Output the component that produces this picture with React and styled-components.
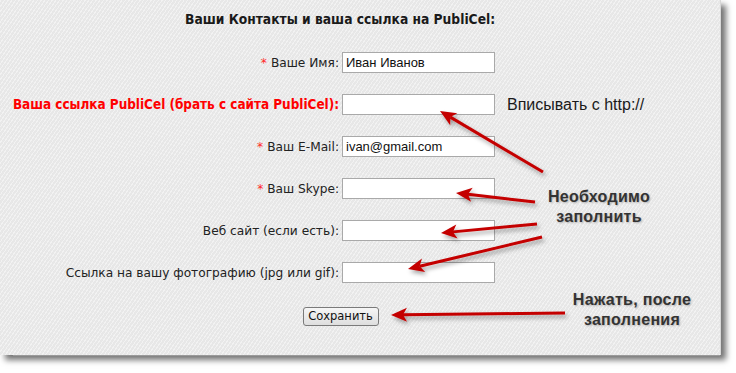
import styled, { createGlobalStyle } from "styled-components";

const Global = createGlobalStyle`
  html, body { margin: 0; padding: 0; background: #fff; }
  #root { width: 736px; height: 373px; position: relative; overflow: hidden; }
`

const Panel = styled.div`
  position: relative;
  width: 720px;
  height: 355px;
  border-right: 1px solid #d8d8d8;
  background-color: #ebebeb;
  background-image: repeating-linear-gradient(
    -55deg,
    rgba(255,255,255,0.35) 0px,
    rgba(255,255,255,0.35) 1px,
    rgba(0,0,0,0.015) 1px,
    rgba(0,0,0,0.015) 3px
  );
  box-shadow: 5px 5px 6px rgba(0,0,0,0.55);
  font-family: "DejaVu Sans", Verdana, sans-serif;
  color: #222;
  display: flex;
  flex-direction: column;

  &::after {
    content: "";
    position: absolute;
    left: 13px;
    right: 0;
    bottom: -1px;
    height: 1px;
    background: #9a9a9a;
  }
`

const Title = styled.h3`
  margin: 12px 0 0 185px;
  font-family: "DejaVu Sans Condensed", "DejaVu Sans", sans-serif;
  font-size: 13.7px;
  font-weight: bold;
  color: #1a1a1a;
  line-height: 15px;
  white-space: nowrap;
`

const Form = styled.div`
  margin-top: 25px;
  display: grid;
  grid-template-columns: 339px 153px auto;
  grid-auto-rows: 21px;
  row-gap: 21px;
  column-gap: 3px;
  align-items: center;
`

const Label = styled.label`
  justify-self: end;
  font-family: ${p => p.$red ? '"DejaVu Sans Condensed", "DejaVu Sans", sans-serif' : '"DejaVu Sans", sans-serif'};
  font-size: ${p => p.$red ? "13.4px" : "12.2px"};
  white-space: nowrap;
  color: ${p => p.$red ? "#ff0000" : "#222"};
  font-weight: ${p => p.$red ? "bold" : "normal"};
`

const Star = styled.span`
  color: #ff2a2a;
  margin-right: 4px;
`

const Input = styled.input`
  box-sizing: border-box;
  width: 153px;
  height: 21px;
  margin: 0;
  padding: 1px 3px;
  border: 1px solid #a9a9a9;
  background: #fff;
  font-family: "Liberation Sans", Arial, sans-serif;
  font-size: 13px;
  color: #111;
  outline: none;
`

const Hint = styled.span`
  margin-left: 9px;
  font-family: "Liberation Sans", Arial, sans-serif;
  font-size: 16px;
  color: #1a1a1a;
  white-space: nowrap;
`

const ButtonRow = styled.div`
  grid-column: 1 / 3;
  justify-self: center;
  padding-left: 186px;
`

const SaveButton = styled.button`
  box-sizing: border-box;
  width: 76px;
  height: 19px;
  padding: 0;
  margin-top: 3px;
  font-family: "DejaVu Sans", sans-serif;
  font-size: 11.5px;
  color: #111;
  border: 1px solid #7a7a7a;
  border-radius: 3px;
  background: linear-gradient(#f6f6f6, #dedede);
`

const Note = styled.div`
  position: absolute;
  left: ${p => p.$x}px;
  top: ${p => p.$y}px;
  width: ${p => p.$w}px;
  text-align: center;
  font-family: "Liberation Sans", Arial, sans-serif;
  font-size: 16px;
  font-weight: bold;
  letter-spacing: 0.3px;
  line-height: 20px;
  color: #333;
  text-shadow: 1px 1px 2px rgba(0,0,0,0.25);
`

const Overlay = styled.svg`
  position: absolute;
  left: 0;
  top: 0;
  pointer-events: none;
`

const arrows = [
  [543, 172, 440, 111],
  [535, 202, 456, 193],
  [537, 224, 441, 233],
  [542, 237, 408, 269],
  [565, 313, 391, 315],
];

function Arrow({ x1, y1, x2, y2 }) {
  const dx = x2 - x1, dy = y2 - y1;
  const len = Math.hypot(dx, dy);
  const ux = dx / len, uy = dy / len;
  const px = -uy, py = ux;
  const headLen = 16, headW = 7;
  const bx = x2 - ux * headLen, by = y2 - uy * headLen;
  const nx = x2 - ux * (headLen - 4), ny = y2 - uy * (headLen - 4);
  const pts = [
    [x2, y2],
    [bx + px * headW, by + py * headW],
    [nx, ny],
    [bx - px * headW, by - py * headW],
  ].map(p => p.join(",")).join(" ");
  return (
    <g>
      <line x1={x1} y1={y1} x2={nx} y2={ny} stroke="#c40000" strokeWidth="3" />
      <polygon points={pts} fill="#c40000" />
    </g>
  );
}

const rows = [
  { label: "Ваше Имя:", req: true, value: "Иван Иванов" },
  { label: "Ваша ссылка PubliCel (брать с сайта PubliCel):", red: true, hint: "Вписывать с http://" },
  { label: "Ваш E-Mail:", req: true, value: "ivan@gmail.com" },
  { label: "Ваш Skype:", req: true },
  { label: "Веб сайт (если есть):" },
  { label: "Ссылка на вашу фотографию (jpg или gif):" },
];

export default function App() {
  return (
    <>
      <Global />
      <Panel>
        <Title>Ваши Контакты и ваша ссылка на PubliCel:</Title>
        <Form>
          {rows.map((r, i) => (
            <>
              <Label key={"l" + i} $red={r.red}>
                {r.req ? <Star>*</Star> : null}
                {r.label}
              </Label>
              <Input key={"i" + i} defaultValue={r.value || ""} />
              <div key={"h" + i}>{r.hint ? <Hint>{r.hint}</Hint> : null}</div>
            </>
          ))}
          <ButtonRow>
            <SaveButton>Сохранить</SaveButton>
          </ButtonRow>
        </Form>
        <Note $x={538} $y={187} $w={122}>Необходимо<br />заполнить</Note>
        <Note $x={564} $y={290} $w={136}>Нажать, после<br />заполнения</Note>
        <Overlay width="736" height="373">
          <defs>
            <filter id="sh" x="-20%" y="-50%" width="140%" height="200%">
              <feDropShadow dx="2" dy="3" stdDeviation="2" floodColor="#000" floodOpacity="0.35" />
            </filter>
          </defs>
          <g filter="url(#sh)">
            {arrows.map((a, i) => (
              <Arrow key={i} x1={a[0]} y1={a[1]} x2={a[2]} y2={a[3]} />
            ))}
          </g>
        </Overlay>
      </Panel>
    </>
  );
}
